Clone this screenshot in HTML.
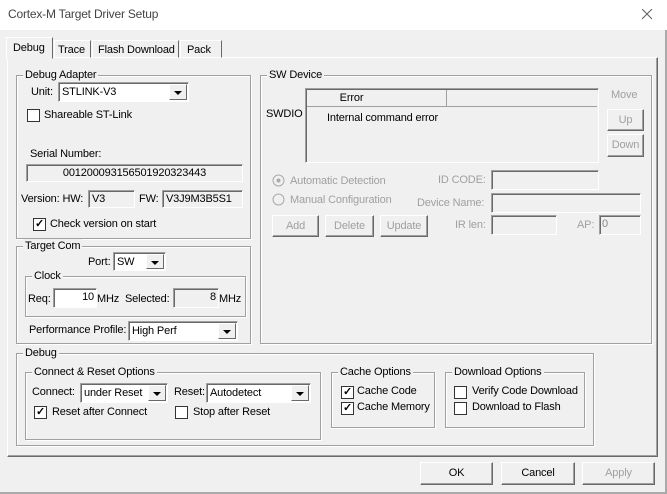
<!DOCTYPE html>
<html><head><style>
*{box-sizing:border-box;margin:0;padding:0}
body{width:667px;height:494px;background:#f0f0f0;font:11px "Liberation Sans",Arial,sans-serif;letter-spacing:-0.15px;color:#000;position:relative;overflow:hidden}
.a{position:absolute;white-space:nowrap}
.g{position:absolute;border:1px solid #a0a0a0;box-shadow:1px 1px 0 #fff, inset 1px 1px 0 #fff}
.gl{position:absolute;top:-8px;left:6px;background:#f0f0f0;padding:0 2px;line-height:14px}
.sunk{position:absolute;border:1px solid;border-color:#a0a0a0 #fff #fff #a0a0a0;box-shadow:inset 1px 1px 0 #696969}
.sel{position:absolute;background:#fff;border:1px solid;border-color:#a0a0a0 #fff #fff #a0a0a0;box-shadow:inset 1px 1px 0 #696969;padding:2px 0 0 3px;line-height:15px;overflow:hidden}
.sel::after{content:"";position:absolute;right:1px;top:1px;bottom:1px;width:16px;background:#f0f0f0;border:1px solid;border-color:#fff #696969 #696969 #fff}
.sel i{position:absolute;right:6px;top:8px;border:4px solid transparent;border-top:4px solid #000;border-bottom:0;z-index:2}
.cb{position:absolute;width:13px;height:13px;border:1px solid #333;background:#fff;font-size:11px;line-height:11px;text-align:center;font-weight:bold}
.btn{position:absolute;border:1px solid;border-color:#fff #696969 #696969 #fff;box-shadow:inset -1px -1px 0 #a0a0a0;text-align:center;line-height:20px}
.dis{color:#a0a0a0}
</style></head><body>
<div class="a" style="left:0;top:0;width:667px;height:30px;background:#fff"></div>
<div class="a" style="left:8px;top:7px;color:#444;font-size:12px;letter-spacing:-0.2px">Cortex-M Target Driver Setup</div>
<svg class="a" style="left:642px;top:9px" width="11" height="11"><path d="M0 0L10 10M10 0L0 10" stroke="#666" stroke-width="1.1"/></svg>
<div class="a" style="left:665px;top:30px;width:2px;height:464px;background:#aaa"></div>

<div class="a" style="left:7px;top:57px;width:651px;height:400px;border:1px solid;border-color:#fff #696969 #696969 #fff;box-shadow:inset -1px -1px 0 #a0a0a0"></div>
<div class="a" style="left:54px;top:40px;width:37px;height:18px;border:1px solid;border-color:#fff #696969 transparent #fff;padding:3px 0 0 3px">Trace</div>
<div class="a" style="left:92px;top:40px;width:87px;height:18px;border:1px solid;border-color:#fff #696969 transparent #fff;padding:3px 0 0 5px">Flash Download</div>
<div class="a" style="left:180px;top:40px;width:42px;height:18px;border:1px solid;border-color:#fff #696969 transparent #fff;padding:3px 0 0 6px">Pack</div>
<div class="a" style="left:6px;top:37px;width:47px;height:22px;background:#f0f0f0;border:1px solid;border-color:#fff #696969 transparent #fff;padding:4px 0 0 6px">Debug</div>

<div class="g" style="left:16px;top:75px;width:235px;height:164px"><span class="gl">Debug Adapter</span></div>
<div class="a" style="left:31px;top:86px">Unit:</div>
<div class="sel" style="left:58px;top:82px;width:131px;height:20px">STLINK-V3<i></i></div>
<div class="cb" style="left:27px;top:109px"></div><div class="a" style="left:44px;top:109px">Shareable ST-Link</div>
<div class="a" style="left:30px;top:148px">Serial Number:</div>
<div class="sunk" style="left:26px;top:164px;width:217px;height:18px;text-align:center;line-height:16px">001200093156501920323443</div>
<div class="a" style="left:21px;top:193px">Version: HW:</div>
<div class="sunk" style="left:88px;top:190px;width:47px;height:18px;padding-left:3px;line-height:16px">V3</div>
<div class="a" style="left:139px;top:193px">FW:</div>
<div class="sunk" style="left:162px;top:190px;width:81px;height:18px;padding-left:3px;line-height:16px">V3J9M3B5S1</div>
<div class="cb" style="left:33px;top:218px">✓</div><div class="a" style="left:50px;top:218px">Check version on start</div>

<div class="g" style="left:16px;top:246px;width:235px;height:98px"><span class="gl">Target Com</span></div>
<div class="a" style="left:88px;top:256px">Port:</div>
<div class="sel" style="left:113px;top:252px;width:53px;height:19px">SW<i></i></div>
<div class="g" style="left:25px;top:276px;width:221px;height:41px"><span class="gl">Clock</span></div>
<div class="a" style="left:28px;top:293px">Req:</div>
<div class="sunk" style="left:53px;top:288px;width:44px;height:20px;background:#fff;text-align:right;padding-right:2px;line-height:16px">10</div>
<div class="a" style="left:97px;top:293px">MHz</div>
<div class="a" style="left:125px;top:293px">Selected:</div>
<div class="sunk" style="left:173px;top:288px;width:46px;height:20px;text-align:right;padding-right:2px;line-height:16px">8</div>
<div class="a" style="left:219px;top:293px">MHz</div>
<div class="a" style="left:29px;top:324px">Performance Profile:</div>
<div class="sel" style="left:128px;top:321px;width:110px;height:20px">High Perf<i></i></div>

<div class="g" style="left:260px;top:75px;width:392px;height:269px"><span class="gl">SW Device</span></div>
<div class="a" style="left:266px;top:108px">SWDIO</div>
<div class="sunk" style="left:305px;top:88px;width:294px;height:75px"></div>
<div class="a" style="left:307px;top:90px;width:140px;height:17px;border-right:1px solid #a0a0a0;border-bottom:1px solid #a0a0a0;text-align:center;line-height:16px;padding-right:50px">Error</div>
<div class="a" style="left:447px;top:90px;width:150px;height:17px;border-bottom:1px solid #a0a0a0"></div>
<div class="a" style="left:327px;top:112px">Internal command error</div>
<div class="a dis" style="left:611px;top:89px">Move</div>
<div class="btn dis" style="left:607px;top:109px;width:37px;height:22px">Up</div>
<div class="btn dis" style="left:607px;top:134px;width:37px;height:23px">Down</div>
<svg class="a" style="left:272px;top:174px" width="13" height="13"><circle cx="6.5" cy="6.5" r="5.5" fill="#f0f0f0" stroke="#aaa"/><circle cx="6.5" cy="6.5" r="2" fill="#aaa"/></svg>
<div class="a dis" style="left:290px;top:175px">Automatic Detection</div>
<svg class="a" style="left:272px;top:193px" width="13" height="13"><circle cx="6.5" cy="6.5" r="5.5" fill="#f0f0f0" stroke="#aaa"/></svg>
<div class="a dis" style="left:290px;top:194px">Manual Configuration</div>
<div class="a dis" style="left:438px;top:174px">ID CODE:</div>
<div class="sunk" style="left:491px;top:170px;width:108px;height:20px"></div>
<div class="a dis" style="left:417px;top:197px">Device Name:</div>
<div class="sunk" style="left:491px;top:193px;width:150px;height:20px"></div>
<div class="btn dis" style="left:272px;top:215px;width:47px;height:22px">Add</div>
<div class="btn dis" style="left:325px;top:215px;width:49px;height:22px">Delete</div>
<div class="btn dis" style="left:380px;top:215px;width:48px;height:22px">Update</div>
<div class="a dis" style="left:455px;top:219px">IR len:</div>
<div class="sunk" style="left:491px;top:215px;width:66px;height:20px"></div>
<div class="a dis" style="left:577px;top:219px">AP:</div>
<div class="sunk" style="left:599px;top:215px;width:42px;height:20px;padding-left:2px;line-height:16px;color:#888">0</div>

<div class="g" style="left:16px;top:353px;width:578px;height:93px"><span class="gl">Debug</span></div>
<div class="g" style="left:25px;top:372px;width:296px;height:68px"><span class="gl">Connect &amp; Reset Options</span></div>
<div class="a" style="left:32px;top:386px">Connect:</div>
<div class="sel" style="left:80px;top:383px;width:88px;height:20px">under Reset<i></i></div>
<div class="a" style="left:174px;top:386px">Reset:</div>
<div class="sel" style="left:206px;top:383px;width:105px;height:20px">Autodetect<i></i></div>
<div class="cb" style="left:34px;top:406px">✓</div><div class="a" style="left:52px;top:406px">Reset after Connect</div>
<div class="cb" style="left:175px;top:406px"></div><div class="a" style="left:193px;top:406px">Stop after Reset</div>
<div class="g" style="left:331px;top:372px;width:104px;height:56px"><span class="gl">Cache Options</span></div>
<div class="cb" style="left:341px;top:386px">✓</div><div class="a" style="left:357px;top:385px">Cache Code</div>
<div class="cb" style="left:341px;top:402px">✓</div><div class="a" style="left:357px;top:401px">Cache Memory</div>
<div class="g" style="left:445px;top:372px;width:140px;height:56px"><span class="gl">Download Options</span></div>
<div class="cb" style="left:454px;top:386px"></div><div class="a" style="left:472px;top:385px">Verify Code Download</div>
<div class="cb" style="left:454px;top:402px"></div><div class="a" style="left:472px;top:401px">Download to Flash</div>

<div class="btn" style="left:420px;top:462px;width:73px;height:23px">OK</div>
<div class="btn" style="left:501px;top:462px;width:74px;height:23px">Cancel</div>
<div class="btn dis" style="left:582px;top:462px;width:73px;height:23px">Apply</div>
<div class="a" style="left:0;top:492px;width:667px;height:2px;background:#aaa"></div>
</body></html>
